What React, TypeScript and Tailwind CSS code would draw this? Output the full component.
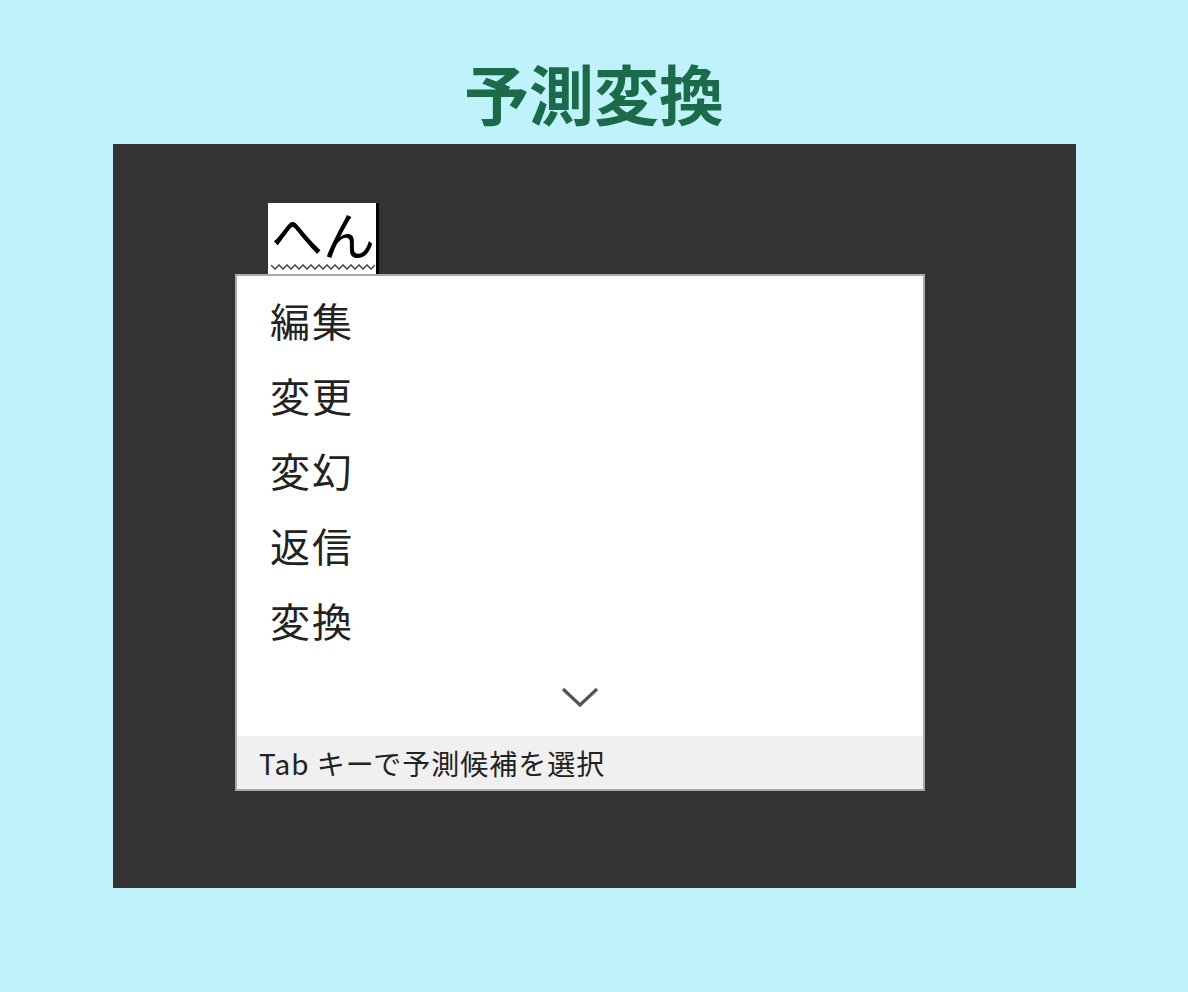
const jp = { fontFamily: '"Noto Sans CJK JP", "Noto Sans", sans-serif' };

const candidates = ["編集", "変更", "変幻", "返信", "変換"];

function Squiggle() {
  const pts: string[] = [];
  for (let i = 0; i <= 26; i++) {
    pts.push(`${i * 4},${i % 2 === 0 ? 1 : 5}`);
  }
  return (
    <svg width="104" height="7" viewBox="0 0 104 7" className="block">
      <polyline points={pts.join(" ")} fill="none" stroke="#444" strokeWidth="1.5" />
    </svg>
  );
}

export default function App() {
  return (
    <div className="w-[1188px] h-[992px] bg-[#c0f2fc] flex flex-col" style={jp}>
      <div className="h-[144px] pt-[56px] flex justify-center">
        <h1 className="text-[65px] leading-[72px] font-bold text-[#1b6b4a]">予測変換</h1>
      </div>
      <div className="ml-[113px] w-[963px] h-[744px] bg-[#333333] pt-[59px] pl-[122px] flex flex-col">
        <div className="ml-[33px] w-[111px] h-[71px] bg-white flex">
          <div className="flex-1 flex flex-col pl-[3px]">
            <div className="text-[52px] leading-[61px] text-black">へん</div>
            <Squiggle />
          </div>
          <div className="w-[3px] bg-black" />
        </div>
        <div className="w-[690px] h-[517px] bg-white border-2 border-[#a9a9a9] flex flex-col">
          <div className="pt-[6px] pl-[33px] flex flex-col">
            {candidates.map((c) => (
              <div key={c} className="h-[75px] flex items-center text-[40px] tracking-[2px] text-[#222]">
                {c}
              </div>
            ))}
          </div>
          <div className="flex-1 flex items-center justify-center">
            <svg width="40" height="22" viewBox="0 0 40 22">
              <polyline points="3,3 20,19 37,3" fill="none" stroke="#555" strokeWidth="3.2" />
            </svg>
          </div>
          <div className="h-[53px] bg-[#f0f0f0] flex items-center pl-[22px] text-[28px] tracking-[1px] text-[#222]">
            Tab キーで予測候補を選択
          </div>
        </div>
      </div>
    </div>
  );
}
